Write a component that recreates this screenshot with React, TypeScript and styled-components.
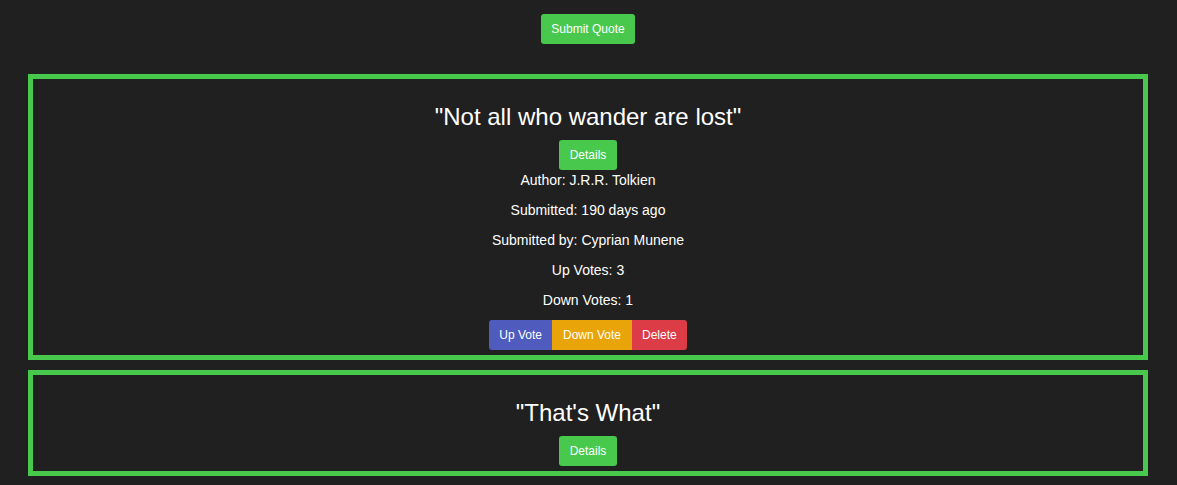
import React from "react";
import styled, { createGlobalStyle } from "styled-components";

const Global = createGlobalStyle`
  html, body { margin: 0; padding: 0; background: #202020; }
  body { font-family: "Liberation Sans", Arial, sans-serif; color: #ffffff; }
`;

const Page = styled.div`
  min-height: 485px;
  background: #202020;
  display: flex;
  flex-direction: column;
  align-items: stretch;
  padding: 14px 29px 10px 28px;
  box-sizing: border-box;
`;

const Top = styled.div`
  display: flex;
  justify-content: center;
  margin-bottom: 30px;
`;

const Button = styled.button<{ $bg: string }>`
  font-family: "Liberation Sans", Arial, sans-serif;
  font-size: 12px;
  color: #ffffff;
  background: ${(p) => p.$bg};
  border: none;
  border-radius: 3px;
  height: 30px;
  padding: 0 10.5px;
  cursor: pointer;
`;

const Card = styled.div`
  border: 5px solid #48c94e;
  display: flex;
  flex-direction: column;
  align-items: center;
  margin-bottom: 10px;
  padding: 24px 0 5px;
`;

const Quote = styled.h2`
  margin: 0 0 9px;
  font-size: 24px;
  line-height: 28px;
  font-weight: 400;
  color: #ffffff;
`;

const Info = styled.p`
  margin: 0;
  font-size: 14px;
  line-height: 16px;
  color: #ffffff;
  & + & { margin-top: 14px; }
`;

const InfoList = styled.div`
  display: flex;
  flex-direction: column;
  align-items: center;
  margin-top: 2px;
`;

const Group = styled.div`
  display: flex;
  margin-top: 12px;
  & > button { border-radius: 0; }
  & > button:first-child { border-radius: 3px 0 0 3px; }
  & > button:last-child { border-radius: 0 3px 3px 0; }
`;

export default function App() {
  return (
    <>
      <Global />
      <Page>
        <Top>
          <Button $bg="#48c94e">Submit Quote</Button>
        </Top>
        <Card>
          <Quote>"Not all who wander are lost"</Quote>
          <Button $bg="#48c94e">Details</Button>
          <InfoList>
            <Info>Author: J.R.R. Tolkien</Info>
            <Info>Submitted: 190 days ago</Info>
            <Info>Submitted by: Cyprian Munene</Info>
            <Info>Up Votes: 3</Info>
            <Info>Down Votes: 1</Info>
          </InfoList>
          <Group>
            <Button $bg="#4f5bbd">Up Vote</Button>
            <Button $bg="#e8a408">Down Vote</Button>
            <Button $bg="#dc3c46">Delete</Button>
          </Group>
        </Card>
        <Card>
          <Quote>"That's What"</Quote>
          <Button $bg="#48c94e">Details</Button>
        </Card>
      </Page>
    </>
  );
}
